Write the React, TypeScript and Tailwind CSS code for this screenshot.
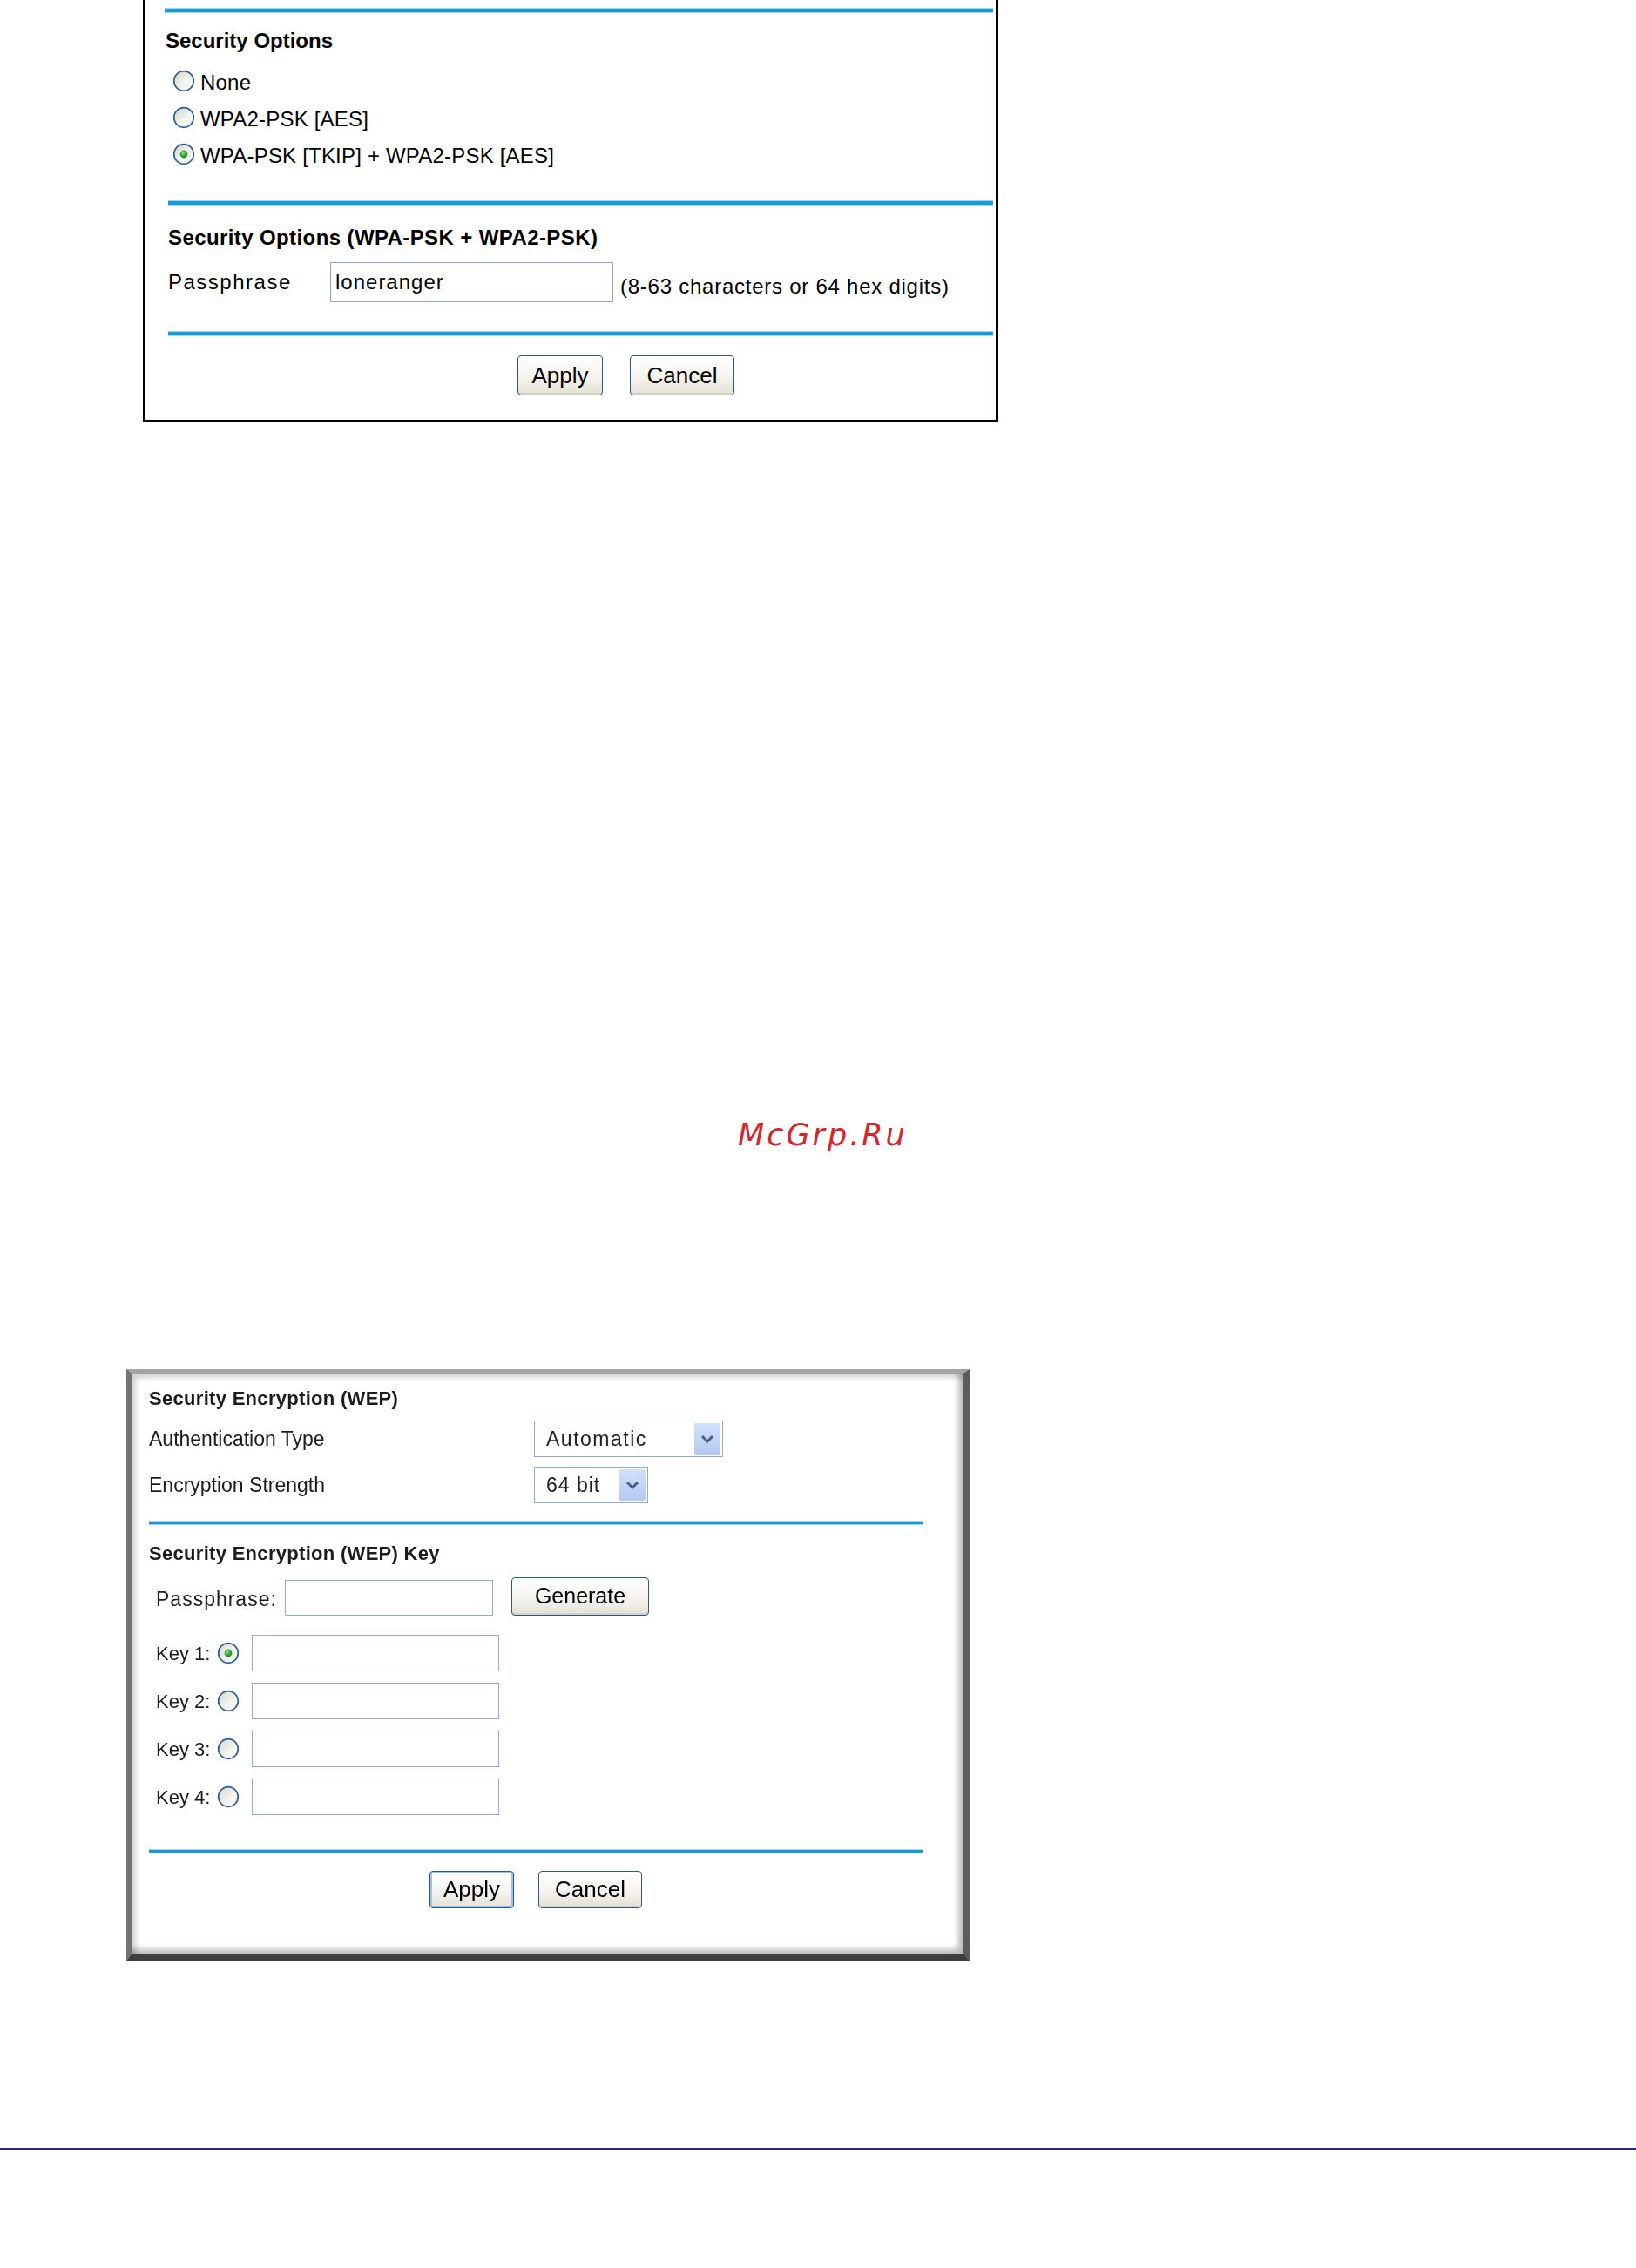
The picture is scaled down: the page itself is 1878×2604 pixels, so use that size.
import React from 'react';

// XP-style radio button
const Radio: React.FC<{ checked?: boolean; size?: number }> = ({ checked = false, size = 26 }) => (
  <svg width={size} height={size} viewBox="0 0 26 26" className="shrink-0">
    <defs>
      <linearGradient id={checked ? 'rf-on' : 'rf-off'} x1="0" y1="0" x2="1" y2="1">
        <stop offset="0" stopColor="#d4d4cc" />
        <stop offset="0.55" stopColor="#f3f3ef" />
        <stop offset="1" stopColor="#ffffff" />
      </linearGradient>
      <radialGradient id="dot" cx="0.4" cy="0.35" r="0.7">
        <stop offset="0" stopColor="#8fe08a" />
        <stop offset="0.5" stopColor="#2fae2f" />
        <stop offset="1" stopColor="#1d7d1d" />
      </radialGradient>
    </defs>
    <circle cx="13" cy="13" r="11.3" fill={`url(#${checked ? 'rf-on' : 'rf-off'})`} stroke="#2f5f8e" strokeWidth="1.7" />
    {checked && <circle cx="13" cy="13" r="4.4" fill="url(#dot)" />}
  </svg>
);

const XpButton: React.FC<{ label: string; w: string; h: string; text: string; focus?: boolean }> = ({ label, w, h, text, focus }) => (
  <button
    className={`${w} ${h} ${text} rounded-[4px] border-[1.5px] border-[#2a5889] bg-gradient-to-b from-white via-[#f6f5f0] to-[#e4e1d4] text-black flex items-center justify-center ${
      focus ? 'shadow-[inset_0_0_0_2px_#9fbff0]' : 'shadow-[inset_0_-2px_0_#d6d2c2]'
    }`}
  >
    {label}
  </button>
);

const SelectBox: React.FC<{ value: string; w: string; tracking: string }> = ({ value, w, tracking }) => (
  <div className={`${w} h-[42px] border-[1.5px] border-[#93acc8] bg-white flex items-center justify-between pl-[13px] pr-[2px]`}>
    <span className={`text-[23px] text-[#222] ${tracking}`}>{value}</span>
    <div className="w-[30px] h-[36px] rounded-[2px] bg-gradient-to-b from-[#d3e0fb] to-[#b4c9f3] flex items-center justify-center">
      <svg width="16" height="12" viewBox="0 0 16 12">
        <path d="M2 3 L8 9 L14 3" fill="none" stroke="#4a5f8a" strokeWidth="3" />
      </svg>
    </div>
  </div>
);

const BlueRule: React.FC<{ className: string }> = ({ className }) => (
  <div className={`${className} bg-[#1a9ad5] shadow-[0_1px_0_#9fd6ef,0_-1px_0_#9fd6ef]`} />
);

const keys = [1, 2, 3, 4];

export default function App() {
  return (
    <div className="w-[1878px] h-[2604px] bg-white flex flex-col" style={{ fontFamily: '"Liberation Sans", Arial, sans-serif' }}>
      {/* WPA security options panel */}
      <div className="ml-[164px] w-[982px] h-[485px] border-x-[3px] border-b-[3px] border-black flex flex-col text-black">
        <BlueRule className="mt-[10px] ml-[22px] mr-[3px] h-[4px]" />
        <div className="mt-[18px] ml-[23px] text-[24px] leading-[30px] font-bold">Security Options</div>
        <div className="mt-[10px] ml-[31px] flex flex-col">
          {['None', 'WPA2-PSK [AES]', 'WPA-PSK [TKIP] + WPA2-PSK [AES]'].map((opt, i) => (
            <div key={opt} className="h-[42px] flex items-center gap-[6px]">
              <Radio checked={i === 2} />
              <span className="mt-[3px] text-[24px] leading-[42px] tracking-[0.2px]">{opt}</span>
            </div>
          ))}
        </div>
        <BlueRule className="mt-[33px] ml-[26px] mr-[3px] h-[4px]" />
        <div className="mt-[23px] ml-[26px] text-[24px] leading-[30px] font-bold tracking-[0.4px]">
          Security Options (WPA-PSK + WPA2-PSK)
        </div>
        <div className="mt-[13px] ml-[26px] h-[46px] flex items-center">
          <span className="w-[186px] text-[24px] tracking-[1.5px]">Passphrase</span>
          <div className="w-[325px] h-[46px] border-[1.5px] border-[#8eaacb] flex items-center pl-[5px]">
            <span className="text-[24px] tracking-[1px]">loneranger</span>
          </div>
          <span className="ml-[8px] mt-[9px] text-[24px] tracking-[0.75px]">(8-63 characters or 64 hex digits)</span>
        </div>
        <BlueRule className="mt-[34px] ml-[26px] mr-[3px] h-[4px]" />
        <div className="mt-[23px] ml-[427px] flex gap-[31px]">
          <XpButton label="Apply" w="w-[98px]" h="h-[46px]" text="text-[26px]" />
          <XpButton label="Cancel" w="w-[120px]" h="h-[46px]" text="text-[26px]" />
        </div>
      </div>

      <div
        className="mt-[798px] ml-[847px] text-[35px] leading-[40px] italic tracking-[3px] text-[#d6262b]"
        style={{ fontFamily: '"DejaVu Sans", sans-serif' }}
      >
        McGrp.Ru
      </div>

      {/* WEP encryption panel */}
      <div className="mt-[249px] ml-[145px] w-[968px] h-[680px] border-t-[5px] border-l-[6px] border-r-[7px] border-b-[8px] border-t-[#a4a4a4] border-l-[#747474] border-r-[#5c5c5c] border-b-[#3e3e3e] shadow-[inset_5px_5px_6px_rgba(0,0,0,0.18),inset_-6px_-6px_7px_rgba(0,0,0,0.28)] flex flex-col text-[#1c1c1c] blur-[0.4px]">
        <div className="mt-[15px] ml-[20px] text-[22px] leading-[28px] font-bold tracking-[0.3px]">Security Encryption (WEP)</div>
        <div className="mt-[11px] ml-[20px] h-[42px] flex items-center">
          <span className="w-[442px] text-[23px]">Authentication Type</span>
          <SelectBox value="Automatic" w="w-[217px]" tracking="tracking-[1.5px]" />
        </div>
        <div className="mt-[11px] ml-[20px] h-[42px] flex items-center">
          <span className="w-[442px] text-[23px]">Encryption Strength</span>
          <SelectBox value="64 bit" w="w-[131px]" tracking="tracking-[1px]" />
        </div>
        <BlueRule className="mt-[21px] ml-[20px] w-[889px] h-[3px]" />
        <div className="mt-[20px] ml-[20px] text-[22px] leading-[28px] font-bold tracking-[0.3px]">Security Encryption (WEP) Key</div>
        <div className="mt-[13px] ml-[28px] h-[44px] flex items-center">
          <span className="w-[148px] mt-[6px] text-[23px] tracking-[1px]">Passphrase:</span>
          <div className="w-[239px] h-[41px] mt-[3px] border-[1.5px] border-[#93acc8] bg-white" />
          <div className="ml-[21px]">
            <XpButton label="Generate" w="w-[158px]" h="h-[44px]" text="text-[25px]" />
          </div>
        </div>
        <div className="mt-[22px] ml-[28px] flex flex-col gap-[13px]">
          {keys.map((k) => (
            <div key={k} className="h-[42px] flex items-center">
              <span className="w-[70px] text-[22px]">Key {k}:</span>
              <Radio checked={k === 1} />
              <div className="ml-[14px] w-[284px] h-[42px] border-[1.5px] border-[#93acc8] bg-white" />
            </div>
          ))}
        </div>
        <BlueRule className="mt-[40px] ml-[20px] w-[889px] h-[3px]" />
        <div className="mt-[21px] ml-[342px] flex gap-[28px]">
          <XpButton label="Apply" w="w-[97px]" h="h-[43px]" text="text-[26px]" focus />
          <XpButton label="Cancel" w="w-[119px]" h="h-[43px]" text="text-[26px]" />
        </div>
      </div>

      <div className="mt-[214px] w-full h-[2px] bg-[#27278a]" />
    </div>
  );
}
